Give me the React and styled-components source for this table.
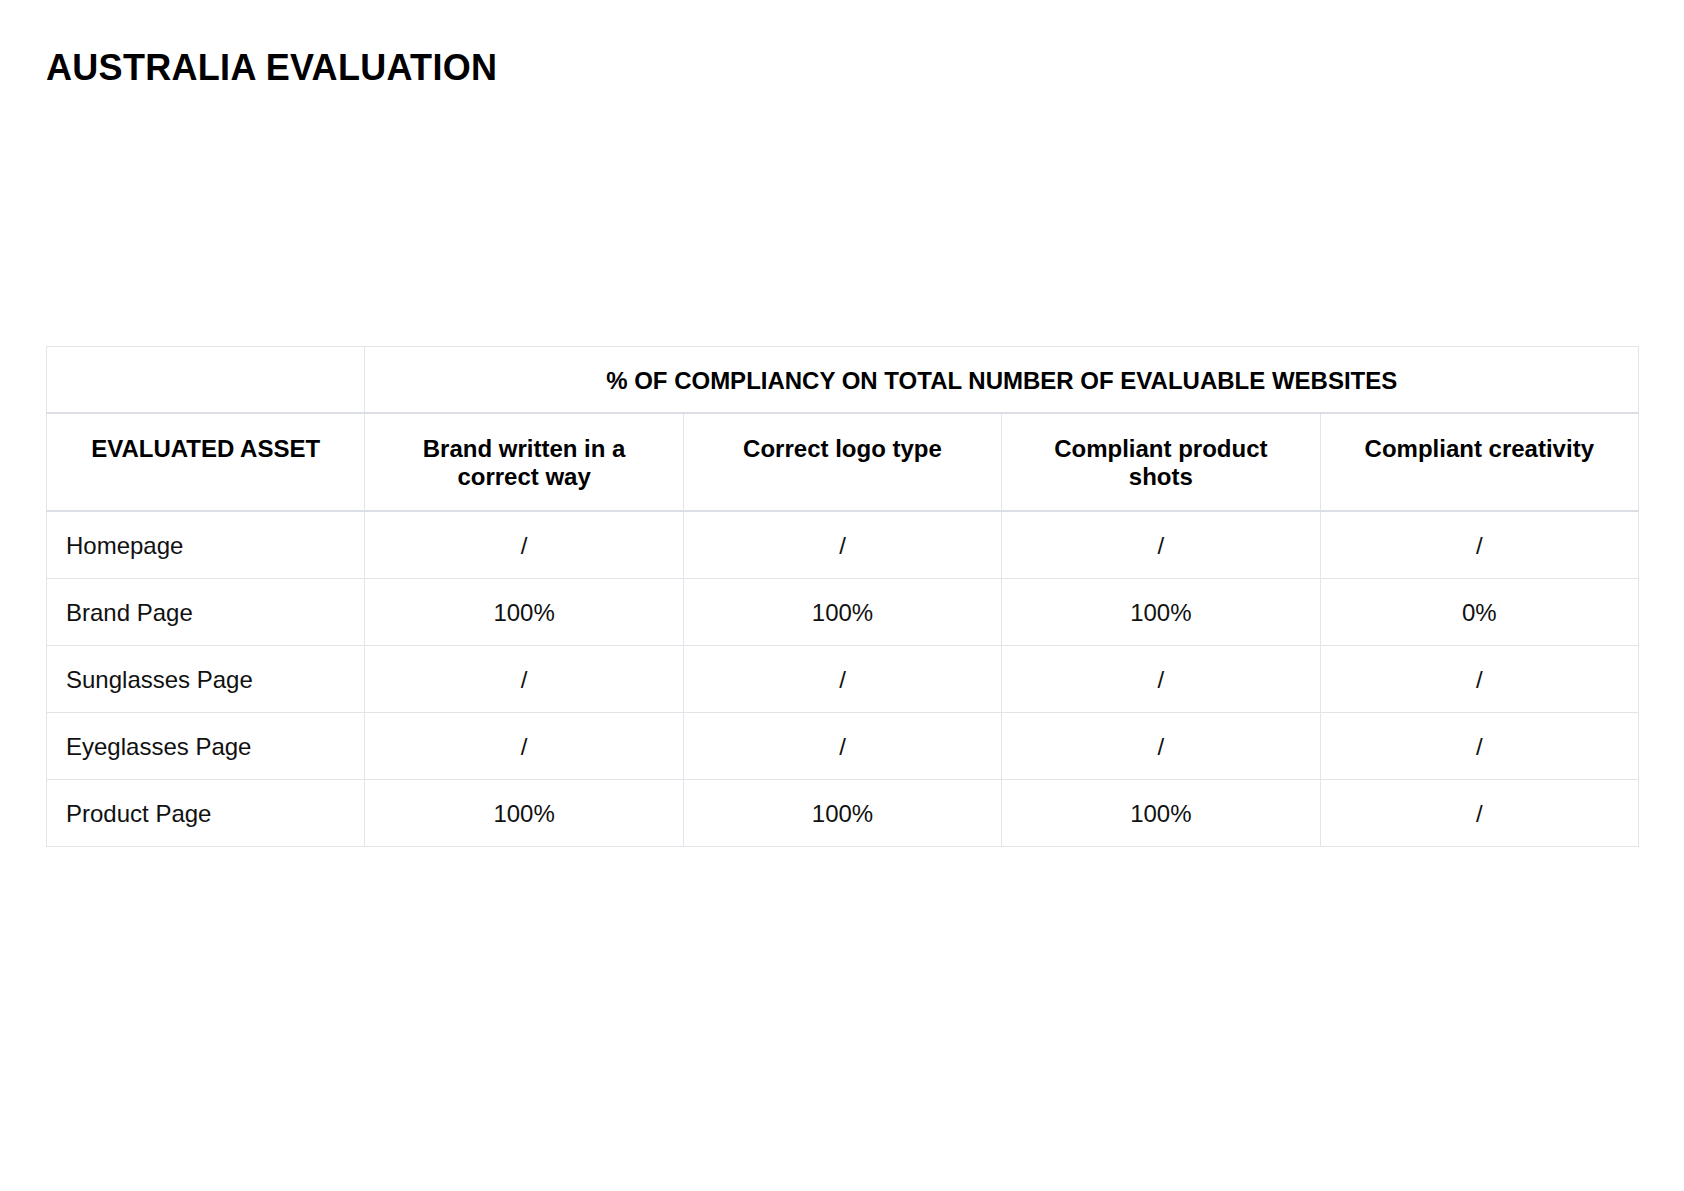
import React from 'react';
import styled, { createGlobalStyle } from 'styled-components';

const GlobalStyle = createGlobalStyle`
  html, body {
    margin: 0;
    padding: 0;
    background: #ffffff;
  }
  body {
    font-family: "Liberation Sans", Arial, Helvetica, sans-serif;
    color: #000000;
  }
`;

const columns = [
  'Brand written in a correct way',
  'Correct logo type',
  'Compliant product shots',
  'Compliant creativity',
];

const rows = [
  { asset: 'Homepage', values: ['/', '/', '/', '/'] },
  { asset: 'Brand Page', values: ['100%', '100%', '100%', '0%'] },
  { asset: 'Sunglasses Page', values: ['/', '/', '/', '/'] },
  { asset: 'Eyeglasses Page', values: ['/', '/', '/', '/'] },
  { asset: 'Product Page', values: ['100%', '100%', '100%', '/'] },
];

export default function App() {
  return (
    <Page>
      <GlobalStyle />
      <Title>AUSTRALIA EVALUATION</Title>
      <Table>
        <colgroup>
          <col style={{ width: '20%' }} />
          {columns.map(c => (
            <col key={c} style={{ width: '20%' }} />
          ))}
        </colgroup>
        <thead>
          <tr>
            <HeadCell />
            <HeadCell colSpan={4} $middle>
              % OF COMPLIANCY ON TOTAL NUMBER OF EVALUABLE WEBSITES
            </HeadCell>
          </tr>
          <tr>
            <HeadCell>EVALUATED ASSET</HeadCell>
            {columns.map(c => (
              <HeadCell key={c}>
                <Wrap>{c}</Wrap>
              </HeadCell>
            ))}
          </tr>
        </thead>
        <tbody>
          {rows.map(r => (
            <tr key={r.asset}>
              <Cell $left>{r.asset}</Cell>
              {r.values.map((v, i) => (
                <Cell key={i}>{v}</Cell>
              ))}
            </tr>
          ))}
        </tbody>
      </Table>
    </Page>
  );
}

const Page = styled.main`
  box-sizing: border-box;
  width: 1684px;
  min-height: 1191px;
  padding: 50px 45px 0 46px;
`;

const Title = styled.h1`
  margin: 0 0 260px 0;
  font-size: 36px;
  line-height: 36px;
  font-weight: bold;
  letter-spacing: 0.3px;
`;

const Table = styled.table`
  width: 1593px;
  table-layout: fixed;
  border-collapse: collapse;
  font-size: 24px;
  line-height: 28px;
`;

const HeadCell = styled.th`
  border: 1px solid #e2e4ea;
  border-bottom: 2px solid #dcdfe5;
  padding: ${p => (p.$middle ? '20px 18px 17px' : '21px 18px 19px')};
  font-weight: bold;
  text-align: center;
  vertical-align: ${p => (p.$middle ? 'middle' : 'top')};
  color: #000000;
`;

const Wrap = styled.span`
  display: block;
  margin: 0 auto;
  max-width: 260px;
`;

const Cell = styled.td`
  border: 1px solid #e2e4ea;
  padding: 20px 19px 18px;
  text-align: ${p => (p.$left ? 'left' : 'center')};
  vertical-align: middle;
  font-weight: normal;
  color: #111111;
`;
